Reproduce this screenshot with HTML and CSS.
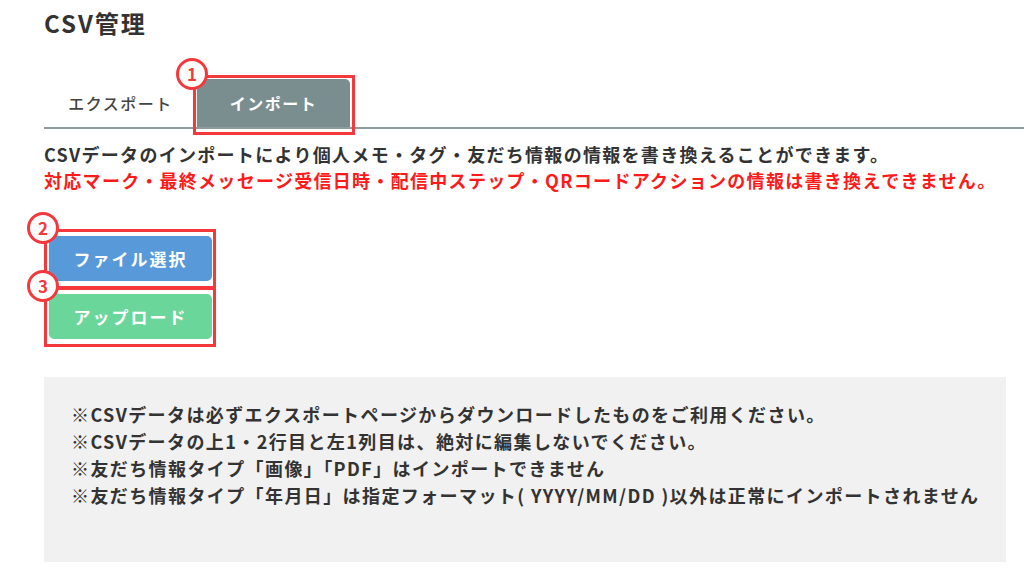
FILE: index.html
```html
<!DOCTYPE html>
<html lang="ja">
	<head>
		<title>CSV管理</title>
		<meta charset="utf-8">
		<link rel="stylesheet" href="styles.css">
	</head>

	<body>

	<div class="page">
		<h1 class="page-title">CSV管理</h1>

		<ul class="tabs">
			<li class="tab">エクスポート</li>
			<li class="tab active">
				<span class="mark-over"><span class="num">1</span></span>
				インポート
			</li>
		</ul>

		<p class="lead">
			CSVデータのインポートにより個人メモ・タグ・友だち情報の情報を書き換えることができます。<br>
			<span class="warn">対応マーク・最終メッセージ受信日時・配信中ステップ・QRコードアクションの情報は書き換えできません。</span>
		</p>

		<div class="actions">
			<div class="mark-box">
				<span class="num">2</span>
				<button type="button" class="btn btn-blue">ファイル選択</button>
			</div>
			<div class="mark-box second">
				<span class="num">3</span>
				<button type="button" class="btn btn-green">アップロード</button>
			</div>
		</div>

		<div class="notes">
			<p>※CSVデータは必ずエクスポートページからダウンロードしたものをご利用ください。</p>
			<p>※CSVデータの上1・2行目と左1列目は、絶対に編集しないでください。</p>
			<p>※友だち情報タイプ「画像」「PDF」はインポートできません</p>
			<p>※友だち情報タイプ「年月日」は指定フォーマット( YYYY/MM/DD )以外は正常にインポートされません</p>
		</div>
	</div>

	</body>
</html>
```

FILE: styles.css
```css
body {
	margin: 0;
	background-color: #fff;
	color: #333;
	font-family: "Noto Sans CJK JP", "Noto Sans", sans-serif;
}

.page {
	padding: 8px 0 0 44px;
}

.page-title {
	margin: 0;
	font-size: 24px;
	line-height: 30px;
	letter-spacing: 2px;
	font-weight: bold;
}

/*Tabs*/
.tabs {
	display: flex;
	align-items: flex-end;
	list-style: none;
	margin: 41px 0 0;
	padding: 0;
	border-bottom: 2px solid #8e9c9d;
}

.tab {
	position: relative;
	width: 153px;
	height: 48px;
	display: flex;
	align-items: center;
	justify-content: center;
	font-size: 16px;
	font-weight: 500;
	letter-spacing: 1.5px;
	color: #444;
}

.tab.active {
	background-color: #7b8e8f;
	color: #fff;
	font-weight: bold;
	border-radius: 5px 5px 0 0;
}

/*Red annotation frames*/
.mark-over {
	position: absolute;
	left: -4px;
	top: -4px;
	right: -5px;
	bottom: -8px;
	border: 3px solid #f5383b;
}

.mark-box {
	position: relative;
	border: 3px solid #f5383b;
	padding: 4px 1px 5px 2px;
}

.mark-box.second {
	margin-top: -2px;
}

.num {
	position: absolute;
	left: -20px;
	top: -20px;
	width: 32px;
	height: 32px;
	box-sizing: border-box;
	border: 3px solid #f5383b;
	border-radius: 50%;
	background-color: #fff;
	color: #f5383b;
	font-size: 17px;
	font-weight: bold;
	letter-spacing: 0;
	line-height: 26px;
	text-align: center;
	z-index: 2;
}

/*Description*/
.lead {
	margin: 12px 0 0;
	font-size: 18px;
	line-height: 26px;
	letter-spacing: 1.3px;
	font-weight: bold;
}

.warn {
	color: #ff1a1a;
}

/*Buttons*/
.actions {
	display: flex;
	flex-direction: column;
	align-items: flex-start;
	margin-top: 36px;
}

.btn {
	display: block;
	width: 163px;
	height: 45px;
	border: none;
	border-radius: 5px;
	color: #fff;
	font-family: inherit;
	font-size: 17px;
	font-weight: bold;
	letter-spacing: 2px;
}

.btn-blue {
	background-color: #5899da;
}

.btn-green {
	background-color: #6bd69a;
}

/*Notes*/
.notes {
	width: 962px;
	box-sizing: border-box;
	margin-top: 30px;
	padding: 24px 10px 53px 27px;
	background-color: #f1f1f1;
}

.notes p {
	margin: 0;
	font-size: 18px;
	line-height: 27px;
	letter-spacing: 1.4px;
	font-weight: bold;
}
```
